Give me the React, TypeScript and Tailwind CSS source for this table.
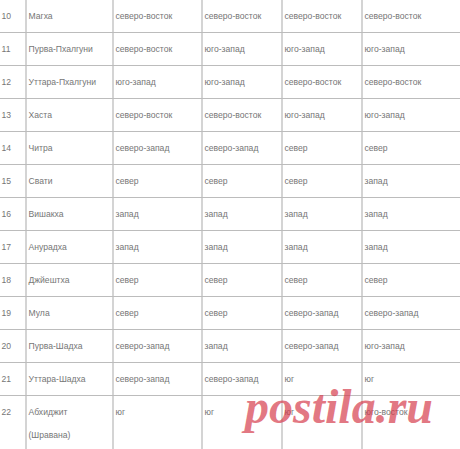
const rows: [string, string[], string, string, string, string][] = [
  ["10", ["Магха"], "северо-восток", "северо-восток", "северо-восток", "северо-восток"],
  ["11", ["Пурва-Пхалгуни"], "северо-восток", "юго-запад", "юго-запад", "юго-запад"],
  ["12", ["Уттара-Пхалгуни"], "юго-запад", "юго-запад", "северо-восток", "северо-восток"],
  ["13", ["Хаста"], "северо-восток", "северо-восток", "юго-запад", "юго-запад"],
  ["14", ["Читра"], "северо-запад", "северо-запад", "север", "север"],
  ["15", ["Свати"], "север", "север", "север", "запад"],
  ["16", ["Вишакха"], "запад", "запад", "запад", "запад"],
  ["17", ["Анурадха"], "запад", "запад", "запад", "запад"],
  ["18", ["Джйештха"], "север", "север", "север", "север"],
  ["19", ["Мула"], "север", "север", "северо-запад", "северо-запад"],
  ["20", ["Пурва-Шадха"], "северо-запад", "запад", "северо-запад", "юго-запад"],
  ["21", ["Уттара-Шадха"], "северо-запад", "северо-запад", "юг", "юг"],
  ["22", ["Абхиджит", "(Шравана)"], "юг", "юг", "юг", "юго-восток"],
]

const cell = "pl-[1.5px] pt-[5px] pb-[4px] border-l-2 border-[#d4d4d4] whitespace-nowrap overflow-hidden"

export default function App() {
  return (
    <div className="relative w-[460px] h-[449px] overflow-hidden bg-white">
      <div
        className="-mt-[1px] text-[8.6px] leading-[23px] text-[#767676]"
        style={{ fontFamily: '"Liberation Sans", Arial, sans-serif' }}
      >
        {rows.map(([num, name, a, b, c, d]) => (
          <div
            key={num}
            className="grid grid-cols-[25px_87px_89px_80px_80px_1fr] border-t border-[#bcbcbc]"
          >
            <div className="pl-[1.5px] pt-[5px] pb-[4px]">{num}</div>
            <div className={cell}>
              {name.map((n) => (
                <div key={n}>{n}</div>
              ))}
            </div>
            <div className={cell}>{a}</div>
            <div className={cell}>{b}</div>
            <div className={cell}>{c}</div>
            <div className={cell}>{d}</div>
          </div>
        ))}
      </div>
      <div
        className="absolute left-[245px] top-[383px] text-[48px] leading-none font-bold italic text-[rgba(214,60,76,0.7)] pointer-events-none"
        style={{ fontFamily: '"Liberation Serif", "Times New Roman", serif' }}
      >
        postila.ru
      </div>
    </div>
  )
}
